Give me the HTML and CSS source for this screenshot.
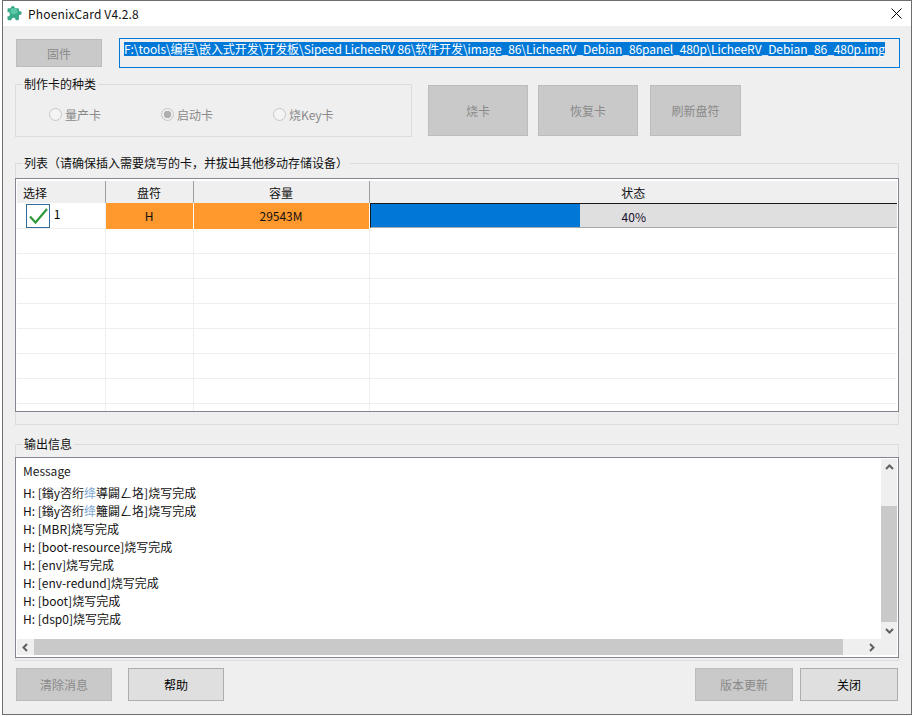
FILE: index.html
```html
<!DOCTYPE html>
<html lang="zh-CN">
  <head>
    <meta charset="UTF-8" />
    <title>PhoenixCard V4.2.8</title>
    <link rel="stylesheet" href="styles.css">
  </head>
  <body>
    <div class="window">
      <header class="titlebar">
        <svg class="app-icon" viewBox="0 0 16 16" width="17" height="17">
          <path d="M5 1.500c1-1 2.500-.8 3 .3.300.6.200 1 .6 1.200H11c.8 0 1.200.5 1.200 1.200v1.300c.3.500 1 .1 1.600.4 1.300.6 1.300 2.700 0 3.300-.6.300-1.300-.1-1.600.4V13c0 .8-.5 1.300-1.200 1.300H9.200c-.5-.3-.1-1-.5-1.500-.7-1-2.700-.9-3.300.2-.3.500 0 1-.4 1.300H2.700c-.8 0-1.300-.5-1.300-1.200v-2.300c.3-.4 1-.1 1.500-.4 1.100-.7 1.100-2.700 0-3.300-.5-.3-1.200 0-1.500-.4V4.300C1.400 3.500 1.900 3 2.700 3h1.700c.5-.3.100-.9.600-1.500z" fill="#3aa98a"/>
          <path d="M5 3h3.500l2 1.500v3L7 9 4 7z" fill="#5cc9a7"/>
        </svg>
        <span class="app-title">PhoenixCard V4.2.8</span>
        <svg class="close-icon" viewBox="0 0 11 11" width="11" height="11">
          <path d="M.5.500l10 10M10.500.500l-10 10" stroke="#000" fill="none"/>
        </svg>
      </header>

      <main class="content">
        <div class="file-row">
          <button class="btn btn-firmware" disabled>固件</button>
          <div class="path-box"><span class="path-text">F:\tools\编程\嵌入式开发\开发板\Sipeed LicheeRV 86\软件开发\image_86\LicheeRV_Debian_86panel_480p\LicheeRV_Debian_86_480p.img</span></div>
        </div>

        <div class="mode-row">
          <section class="group group-mode">
            <div class="group-title">制作卡的种类</div>
            <div class="radio-list">
              <div class="radio-item"><span class="radio"></span>量产卡</div>
              <div class="radio-item"><span class="radio checked"></span>启动卡</div>
              <div class="radio-item"><span class="radio"></span>烧Key卡</div>
            </div>
          </section>
          <button class="btn btn-action btn-burn" disabled>烧卡</button>
          <button class="btn btn-action btn-restore" disabled>恢复卡</button>
          <button class="btn btn-action btn-refresh" disabled>刷新盘符</button>
        </div>

        <section class="group group-list">
          <div class="group-title">列表（请确保插入需要烧写的卡，并拔出其他移动存储设备）</div>
          <div class="table-box">
            <table class="card-table">
              <colgroup>
                <col class="col-select" />
                <col class="col-drive" />
                <col class="col-size" />
                <col class="col-status" />
              </colgroup>
              <thead>
                <tr>
                  <th class="th-select">选择</th>
                  <th>盘符</th>
                  <th>容量</th>
                  <th>状态</th>
                </tr>
              </thead>
              <tbody>
                <tr class="row-active">
                  <td class="cell-select">
                    <span class="check-box">
                      <svg viewBox="0 0 22 22" width="22" height="22">
                        <path d="M3 11.500l5.500 6L20 4" stroke="#2f9a3c" stroke-width="2.200" fill="none"/>
                      </svg>
                    </span>
                    1
                  </td>
                  <td class="cell-orange">H</td>
                  <td class="cell-orange">29543M</td>
                  <td class="cell-progress">
                    <div class="progress">
                      <div class="progress-fill" style="width: 39.800%"></div>
                      <span class="progress-text">40%</span>
                    </div>
                  </td>
                </tr>
                <tr><td></td><td></td><td></td><td></td></tr>
                <tr><td></td><td></td><td></td><td></td></tr>
                <tr><td></td><td></td><td></td><td></td></tr>
                <tr><td></td><td></td><td></td><td></td></tr>
                <tr><td></td><td></td><td></td><td></td></tr>
                <tr><td></td><td></td><td></td><td></td></tr>
                <tr><td></td><td></td><td></td><td></td></tr>
                <tr><td></td><td></td><td></td><td></td></tr>
              </tbody>
            </table>
          </div>
        </section>

        <section class="group group-output">
          <div class="group-title">输出信息</div>
          <div class="output-box">
            <div class="output-main">
              <div class="log">
                <div class="log-head">Message</div>
                <div>H: [鎓y咨绗<span class="log-faint">绛</span>導闢ㄥ垎]烧写完成</div>
                <div>H: [鎓y咨绗<span class="log-faint">绛</span>籬闢ㄥ垎]烧写完成</div>
                <div>H: [MBR]烧写完成</div>
                <div>H: [boot-resource]烧写完成</div>
                <div>H: [env]烧写完成</div>
                <div>H: [env-redund]烧写完成</div>
                <div>H: [boot]烧写完成</div>
                <div>H: [dsp0]烧写完成</div>
              </div>
              <div class="scroll-v">
                <svg class="arrow" viewBox="0 0 9 6" width="9" height="6"><path d="M1 5l3.500-3.500L8 5" stroke="#606060" stroke-width="2" fill="none"/></svg>
                <div class="scroll-v-track"><div class="scroll-v-thumb"></div></div>
                <svg class="arrow" viewBox="0 0 9 6" width="9" height="6"><path d="M1 1l3.500 3.500L8 1" stroke="#606060" stroke-width="2" fill="none"/></svg>
              </div>
            </div>
            <div class="scroll-h">
              <svg class="arrow" viewBox="0 0 6 9" width="6" height="9"><path d="M5 1L1.500 4.500 5 8" stroke="#606060" stroke-width="2" fill="none"/></svg>
              <div class="scroll-h-track"><div class="scroll-h-thumb"></div></div>
              <svg class="arrow" viewBox="0 0 6 9" width="6" height="9"><path d="M1 1l3.500 3.500L1 8" stroke="#606060" stroke-width="2" fill="none"/></svg>
              <div class="scroll-corner"></div>
            </div>
          </div>
        </section>

        <div class="bottom-row">
          <button class="btn btn-bottom" disabled>清除消息</button>
          <button class="btn btn-bottom btn-help">帮助</button>
          <div class="spacer"></div>
          <button class="btn btn-bottom" disabled>版本更新</button>
          <button class="btn btn-bottom btn-close">关闭</button>
        </div>
      </main>
    </div>
  </body>
</html>
```

FILE: styles.css
```css
* {
  margin: 0;
  padding: 0;
  box-sizing: border-box;
}

body {
  font-family: "Noto Sans CJK SC", "Liberation Sans", sans-serif;
  font-size: 12px;
  background-color: #fff;
  color: #000;
  overflow: hidden;
}

.window {
  width: 910px;
  height: 715px;
  margin-left: 2px;
  border: 1px solid #6e6e6e;
  background-color: #efefef;
}

.titlebar {
  display: flex;
  align-items: center;
  height: 25px;
  padding-left: 3px;
  background-color: #fff;
}

.app-icon {
  margin-right: 5px;
}

.app-title {
  font-size: 12px;
  letter-spacing: 0.17px;
  color: #111;
}

.close-icon {
  margin-left: auto;
  margin-right: 9px;
}

.content {
  padding: 12px 0 0 12px;
}

/* buttons */
.btn {
  font-family: inherit;
  font-size: 12px;
  background-color: #dfdfdf;
  border: 1px solid #adadad;
  color: #000;
}

.btn:disabled {
  background-color: #c9c9c9;
  border-color: #bcbcbc;
  color: #8a8a8a;
}

.file-row {
  display: flex;
  align-items: flex-start;
}

.btn-firmware {
  width: 86px;
  height: 28px;
  margin: 1px 17px 0 1px;
}

.path-box {
  width: 781px;
  height: 30px;
  padding: 3px 0 0 4px;
  line-height: 14px;
  background-color: #efefef;
  border: 1px solid #0078d7;
  white-space: nowrap;
  overflow: hidden;
}

.path-text {
  display: inline-block;
  vertical-align: top;
  height: 14px;
  line-height: 14px;
  letter-spacing: -0.08px;
  background-color: #0078d7;
  color: #fff;
}

.mode-row {
  display: flex;
  align-items: flex-start;
  margin-top: 16px;
}

.group {
  border: 1px solid #dcdcdc;
}

.group-title {
  width: fit-content;
  height: 16px;
  line-height: 16px;
  margin: -9px 0 0 7px;
  padding: 0 2px 0 1px;
  background-color: #efefef;
  color: #111;
}

.group-mode {
  width: 397px;
  height: 53px;
  margin-right: 16px;
}

.radio-list {
  display: flex;
  padding: 14px 0 0 33px;
}

.radio-item {
  display: flex;
  align-items: center;
  width: 112px;
  color: #8a8a8a;
}

.radio {
  width: 13px;
  height: 13px;
  margin-right: 3px;
  border: 1px solid #c6c6c6;
  border-radius: 50%;
  background-color: #f4f4f4;
}

.radio.checked {
  background: radial-gradient(circle, #b0b0b0 0 3.500px, #efefef 4px);
}

.btn-action {
  height: 51px;
  margin-top: 1px;
}

.btn-burn {
  width: 100px;
  margin-right: 10px;
}

.btn-restore {
  width: 100px;
  margin-right: 12px;
}

.btn-refresh {
  width: 91px;
}

/* card list */
.group-list {
  width: 884px;
  height: 262px;
  margin-top: 26px;
}

.table-box {
  height: 234px;
  margin: 7px -1px 0 -1px;
  padding: 2px 1px 0 1px;
  border: 1px solid #82878f;
  background-color: #fff;
  overflow: hidden;
}

.card-table {
  width: 880px;
  table-layout: fixed;
  border-collapse: collapse;
}

.col-select {
  width: 88px;
}

.col-drive {
  width: 88px;
}

.col-size {
  width: 176px;
}

.card-table th {
  height: 22px;
  font-weight: normal;
  background-color: #efefef;
  border-right: 1px solid #a0a0a0;
  color: #111;
}

.card-table th:last-child {
  border-right: none;
}

.card-table .th-select {
  text-align: left;
  padding-left: 6px;
}

.card-table td {
  height: 25px;
  padding: 0;
  text-align: center;
  border-right: 1px solid #efefef;
  border-bottom: 1px solid #efefef;
}

.card-table td:last-child {
  border-right: none;
}

.card-table .cell-select {
  text-align: left;
  padding-left: 9px;
}

.check-box {
  display: inline-block;
  width: 24px;
  height: 24px;
  margin-right: 1px;
  vertical-align: middle;
  background-color: #fff;
  border: 1px solid #336b9e;
}

.check-box svg {
  display: block;
}

.card-table .cell-orange {
  background-color: #ff982d;
  border-right: 1px solid #fff;
  border-bottom: none;
  color: #111;
}

.card-table .cell-progress {
  padding: 0;
  border-bottom: 1px solid #fff;
}

.progress {
  position: relative;
  height: 25px;
  background-color: #dfdfdf;
  border-top: 1px solid #1a1a1a;
  border-left: 1px solid #1a1a1a;
  border-bottom: 1px solid #a8a8a8;
}

.progress-fill {
  height: 100%;
  background-color: #0078d7;
}

.progress-text {
  position: absolute;
  left: 0;
  right: 0;
  top: 4px;
  text-align: center;
  color: #1a1030;
}

/* output box */
.group-output {
  width: 884px;
  height: 217px;
  margin-top: 19px;
}

.output-box {
  height: 201px;
  margin: 5px -1px 0 -1px;
  border: 1px solid #82878f;
  background-color: #fff;
  padding: 1px;
}

.output-main {
  display: flex;
  height: 180px;
}

.log {
  flex: 1;
  padding: 3px 0 0 6px;
  line-height: 18px;
  color: #111;
}

.log-head {
  height: 22px;
  color: #222;
}

.log-faint {
  color: #7ea6d0;
}

.scroll-v {
  display: flex;
  flex-direction: column;
  align-items: center;
  width: 16px;
  background-color: #efefef;
}

.scroll-v .arrow {
  flex: none;
  margin: 5px 0;
}

.scroll-v-track {
  flex: 1;
  width: 100%;
  padding-top: 31px;
  margin-bottom: -2px;
}

.scroll-v-thumb {
  height: 116px;
  background-color: #c9c9c9;
}

.scroll-h {
  display: flex;
  align-items: center;
  height: 16px;
  background-color: #efefef;
}

.scroll-h .arrow {
  flex: none;
  margin: 0 6px 0 5px;
}

.scroll-h-track {
  flex: 1;
  height: 100%;
}

.scroll-h-thumb {
  width: 809px;
  height: 100%;
  background-color: #c9c9c9;
}

.scroll-corner {
  width: 16px;
  height: 100%;
}

/* bottom buttons */
.bottom-row {
  display: flex;
  margin-top: 7px;
  padding-left: 1px;
}

.btn-bottom {
  width: 96px;
  height: 33px;
}

.btn-help {
  margin-left: 16px;
}

.spacer {
  width: 471px;
}

.btn-bottom:nth-child(4) {
  width: 98px;
}

.btn-close {
  width: 98px;
  margin-left: 7px;
}
```
